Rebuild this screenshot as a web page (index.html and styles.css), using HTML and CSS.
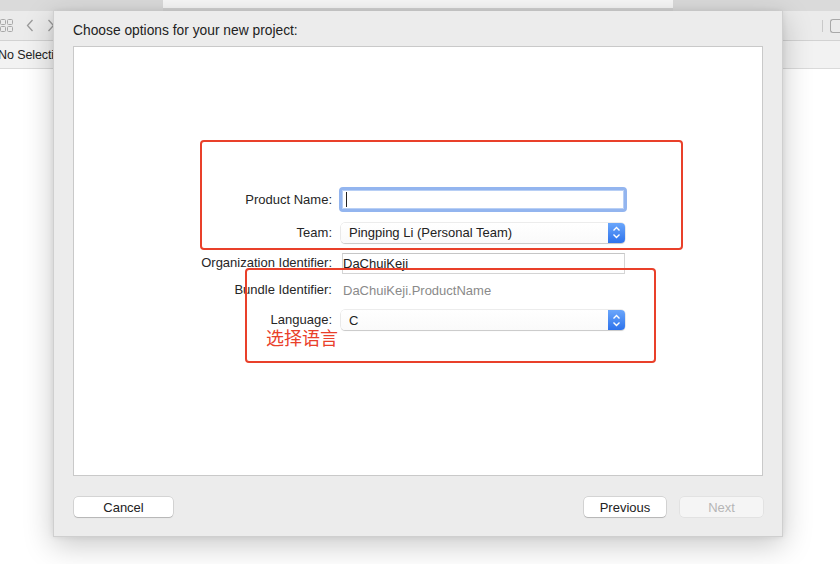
FILE: index.html
```html
<!DOCTYPE html>
<html>
<head>
<meta charset="utf-8">
<link rel="stylesheet" href="styles.css">
</head>
<body>
<div class="app">
  <div class="tabstrip">
    <div class="tab-gray left"></div>
    <div class="tab-white"></div>
    <div class="tab-gray right"></div>
  </div>
  <div class="toolbar">
    <div class="tb-left">
      <svg class="grid-ic" width="13" height="13" viewBox="0 0 13 13"><g fill="none" stroke="#a8a8a8" stroke-width="1"><rect x="0.5" y="0.5" width="5" height="5" rx="1"/><rect x="7.5" y="0.5" width="5" height="5" rx="1"/><rect x="0.5" y="7.5" width="5" height="5" rx="1"/><rect x="7.5" y="7.5" width="5" height="5" rx="1"/></g></svg>
      <svg class="nav-ic" width="8" height="13" viewBox="0 0 8 13"><path d="M6.5 1 L1.5 6.5 L6.5 12" fill="none" stroke="#9a9a9a" stroke-width="1.3"/></svg>
      <svg class="nav-ic" width="8" height="13" viewBox="0 0 8 13"><path d="M1.5 1 L6.5 6.5 L1.5 12" fill="none" stroke="#9a9a9a" stroke-width="1.3"/></svg>
    </div>
    <div class="tb-right">
      <span class="divider"></span>
      <span class="panel-ic"></span>
    </div>
  </div>
  <div class="pathbar"><span class="nosel">No Selection</span></div>
  <div class="editor"></div>
</div>

<div class="sheet">
  <div class="sheet-title">Choose options for your new project:</div>
  <div class="content">
    <div class="form">
      <div class="row r1">
        <label class="lbl">Product Name:</label>
        <div class="text-input focused"><span class="caret"></span></div>
      </div>
      <div class="row r2">
        <label class="lbl">Team:</label>
        <div class="popup"><span class="popup-text">Pingping Li (Personal Team)</span><span class="stepper"><svg width="9" height="13" viewBox="0 0 9 13"><path d="M1.5 4.5 L4.5 1.5 L7.5 4.5 M1.5 8.5 L4.5 11.5 L7.5 8.5" fill="none" stroke="#fff" stroke-width="1.4"/></svg></span></div>
      </div>
      <div class="row r3">
        <label class="lbl">Organization Identifier:</label>
        <div class="text-input plain"><span class="val">DaChuiKeji</span></div>
      </div>
      <div class="row r4">
        <label class="lbl">Bundle Identifier:</label>
        <div class="static">DaChuiKeji.ProductName</div>
      </div>
      <div class="row r5">
        <label class="lbl">Language:</label>
        <div class="popup"><span class="popup-text">C</span><span class="stepper"><svg width="9" height="13" viewBox="0 0 9 13"><path d="M1.5 4.5 L4.5 1.5 L7.5 4.5 M1.5 8.5 L4.5 11.5 L7.5 8.5" fill="none" stroke="#fff" stroke-width="1.4"/></svg></span></div>
      </div>
    </div>
  </div>
  <div class="footer">
    <button class="btn cancel">Cancel</button>
    <div class="footer-right">
      <button class="btn prev">Previous</button>
      <button class="btn next" disabled>Next</button>
    </div>
  </div>
</div>

<div class="mark mark1"></div>
<div class="mark mark2"></div>
<div class="mark-text">选择语言</div>
</body>
</html>
```

FILE: styles.css
```css
html, body {
  margin: 0;
  padding: 0;
}
body {
  width: 840px;
  height: 564px;
  overflow: hidden;
  position: relative;
  background: #ffffff;
  font-family: "Liberation Sans", Arial, "Noto Sans CJK SC", sans-serif;
  font-size: 13px;
  color: #262626;
}

/* background Xcode window */
.app {
  display: flex;
  flex-direction: column;
  height: 564px;
}
.tabstrip {
  display: flex;
  height: 11px;
  background: #d3d3d3;
}
.tab-gray.left { width: 163px; background: #dadada; }
.tab-white { width: 510px; height: 8px; background: #f7f7f7; }
.tab-gray.right { flex: 1; background: #dadada; }

.toolbar {
  height: 29px;
  display: flex;
  justify-content: space-between;
  align-items: center;
  background: #ebebeb;
  border-bottom: 1px solid #d2d2d2;
}
.tb-left {
  display: flex;
  align-items: center;
  gap: 13px;
}
.tb-right {
  display: flex;
  align-items: center;
  gap: 7px;
}
.divider {
  width: 1px;
  height: 12px;
  background: #c9c9c9;
}
.panel-ic {
  width: 9px;
  height: 12px;
  border: 1px solid #a8a8a8;
  border-right: none;
  border-radius: 3px 0 0 3px;
}
.pathbar {
  height: 27px;
  display: flex;
  align-items: center;
  background: #f2f2f2;
  border-bottom: 1px solid #dadada;
}
.nosel {
  margin-left: -2px;
  color: #222;
  font-size: 12.5px;
  letter-spacing: -0.1px;
  white-space: nowrap;
}
.editor {
  flex: 1;
  background: #ffffff;
}

/* the sheet over the window */
.sheet {
  position: absolute;
  left: 53px;
  top: 11px;
  width: 730px;
  height: 526px;
  box-sizing: border-box;
  background: #ececec;
  border: 1px solid #cfcfcf;
  border-top: none;
  box-shadow: 0 8px 28px rgba(0, 0, 0, 0.22), 0 0 6px rgba(0, 0, 0, 0.08);
  padding: 0 19px;
  display: flex;
  flex-direction: column;
}
.sheet-title {
  height: 35px;
  line-height: 16px;
  padding-top: 12px;
  box-sizing: border-box;
  font-size: 13.8px;
  color: #222;
}
.content {
  height: 430px;
  box-sizing: border-box;
  background: #ffffff;
  border: 1px solid #c9c9c9;
}
.form {
  padding-top: 140px;
  display: flex;
  flex-direction: column;
}
.row {
  display: grid;
  grid-template-columns: 258px 288px;
  column-gap: 7px;
  align-items: center;
}
.r1 { height: 25px; }
.r2 { height: 21px; margin-top: 10px; }
.r3 { height: 22px; margin-top: 9px; }
.r4 { height: 20px; margin-top: 6px; }
.r5 { height: 22px; margin-top: 9px; }

.lbl {
  text-align: right;
  color: #262626;
  line-height: 14px;
}
.text-input {
  box-sizing: border-box;
  background: #fff;
  display: flex;
  align-items: center;
}
.text-input.focused {
  height: 25px;
  border: 3px solid #93b5ef;
  border-radius: 4px;
  box-shadow: inset 0 0 0 1px #b8cff5;
  padding-left: 4px;
}
.caret {
  width: 1px;
  height: 15px;
  background: #222;
}
.text-input.plain {
  height: 21px;
  margin: 0 2px 0 3px;
  border: 1px solid #d4d4d4;
  border-top-color: #c6c6c6;
}
.val { color: #222; }
.static {
  color: #8a8a8a;
  padding-left: 4px;
}
.popup {
  height: 20px;
  margin: 0 2px;
  box-sizing: border-box;
  display: flex;
  align-items: stretch;
  background: linear-gradient(#ffffff, #fafafa);
  border-radius: 4px;
  box-shadow: 0 0 0 0.5px rgba(0,0,0,0.15), 0 1px 1px rgba(0,0,0,0.15);
}
.popup-text {
  flex: 1;
  display: flex;
  align-items: center;
  padding-left: 8px;
  color: #222;
}
.stepper {
  width: 17px;
  display: flex;
  align-items: center;
  justify-content: center;
  background: linear-gradient(#6aa6fb, #2e73ec);
  border-radius: 0 4px 4px 0;
}

.footer {
  display: flex;
  justify-content: space-between;
  align-items: center;
  padding-top: 21px;
}
.footer-right {
  display: flex;
  gap: 14px;
}
.btn {
  height: 20px;
  box-sizing: border-box;
  font-family: "Liberation Sans", Arial, sans-serif;
  font-size: 13px;
  color: #222;
  background: #ffffff;
  border: none;
  border-radius: 4px;
  box-shadow: 0 0 0 0.5px rgba(0,0,0,0.2), 0 1px 1px rgba(0,0,0,0.15);
  padding: 0;
  margin: 0;
}
.btn.cancel { width: 99px; margin-left: 1px; }
.btn.prev { width: 82px; }
.btn.next {
  width: 83px;
  color: #b5b5b5;
  background: #f5f5f5;
  box-shadow: 0 0 0 0.5px rgba(0,0,0,0.08);
}

/* red annotations drawn over the screenshot */
.mark {
  position: absolute;
  border: 2.5px solid #e9402a;
  border-radius: 4px;
  box-sizing: border-box;
}
.mark1 { left: 200px; top: 140px; width: 483px; height: 110px; }
.mark2 { left: 245px; top: 268px; width: 411px; height: 95px; }
.mark-text {
  position: absolute;
  left: 266px;
  top: 328px;
  font-family: "Noto Sans CJK SC", sans-serif;
  font-size: 18px;
  line-height: 18px;
  color: #e9402a;
}
```
